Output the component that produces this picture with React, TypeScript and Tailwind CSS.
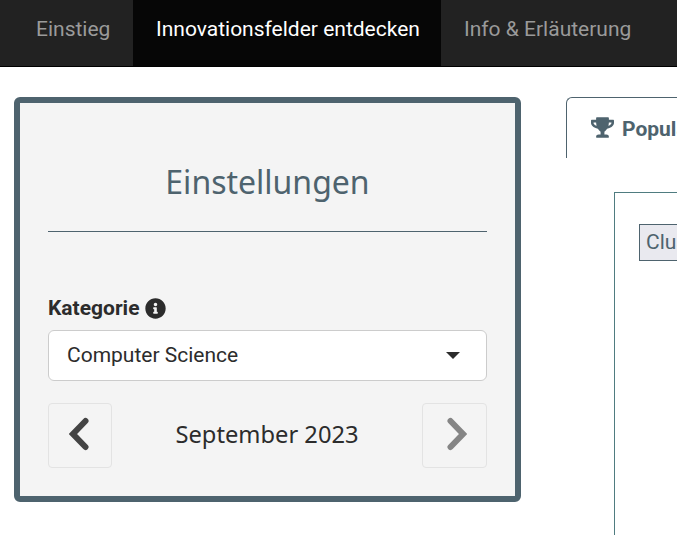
import { FaTrophy, FaInfoCircle } from "react-icons/fa";

function Chevron({ points }: { points: string }) {
  return (
    <svg viewBox="0 0 20 34" className="h-[34px] w-[20px]" fill="none" stroke="currentColor" strokeWidth="6" strokeLinecap="round" strokeLinejoin="miter">
      <polyline points={points} />
    </svg>
  );
}

export default function App() {
  return (
    <div className="h-[535px] w-[677px] overflow-hidden bg-white font-['Roboto',sans-serif]">
      <nav className="flex h-[67px] border-b border-black bg-[#222222] text-[21px] leading-[58px]">
        <a className="w-[133px] pl-[36px] text-[#9a9a9a]">Einstieg</a>
        <a className="w-[308px] bg-[#060606] pl-[23px] text-white">Innovationsfelder entdecken</a>
        <a className="pl-[23px] text-[#9a9a9a]">Info &amp; Erläuterung</a>
      </nav>
      <div className="flex items-start pl-[14px] pt-[30px]">
        <section className="h-[405px] w-[507px] shrink-0 rounded-[6px] border-[6px] border-[#4e636e] bg-[#f4f4f4] px-[28px]">
          <h2 className="mt-[57px] text-center font-['Noto_Sans',sans-serif] text-[32px] leading-[44px] text-[#4e636e]">Einstellungen</h2>
          <hr className="mt-[27px] border-t border-[#4e636e]" />
          <div className="mt-[63px] flex h-[26px] items-center gap-[6px] text-[21px] font-bold leading-[26px] text-[#2c2c2c]">
            <span>Kategorie</span>
            <FaInfoCircle className="h-[21px] w-[21px]" />
          </div>
          <div className="mt-[9px] flex h-[51px] items-center justify-between rounded-[6px] border border-[#cccccc] bg-white pl-[18px] pr-[26px] text-[21px] text-[#2c2c2c]">
            <span>Computer Science</span>
            <span className="h-0 w-0 border-x-[7px] border-t-[7px] border-x-transparent border-t-[#2c2c2c]"></span>
          </div>
          <div className="mt-[22px] flex items-center justify-between">
            <button className="flex h-[65px] w-[64px] items-center justify-center rounded-[4px] border border-[#e3e3e3] pb-[3px] pr-[2px] text-[#444444]">
              <Chevron points="16.5,4 4,17 16.5,30" />
            </button>
            <span className="pb-[2px] font-['Noto_Sans',sans-serif] text-[23.7px] text-[#2c2c2c]">September 2023</span>
            <button className="flex h-[65px] w-[65px] items-center justify-center rounded-[4px] border border-[#e3e3e3] pb-[3px] pl-[4px] text-[#858585]">
              <Chevron points="3.5,4 16,17 3.5,30" />
            </button>
          </div>
        </section>
        <div className="ml-[45px] w-[400px] shrink-0">
          <div className="flex h-[61px] w-[300px] items-start gap-[8px] rounded-tl-[6px] border-l border-t border-[#4e636e] pl-[24px] pt-[17px] text-[21px] font-bold leading-[28px] text-[#4e636e]">
            <FaTrophy className="mt-[2px] h-[21px] w-[23px]" />
            <span>Populär</span>
          </div>
          <div className="ml-[48px] mt-[34px] h-[400px] border-l border-t border-[#4f7c80] pl-[24px] pt-[31px]">
            <div className="flex h-[37px] w-[120px] items-center border border-[#4e636e] bg-[#e9e9ef] pl-[6px] text-[21px] text-[#4e636e]">Cluster</div>
          </div>
        </div>
      </div>
    </div>
  );
}
